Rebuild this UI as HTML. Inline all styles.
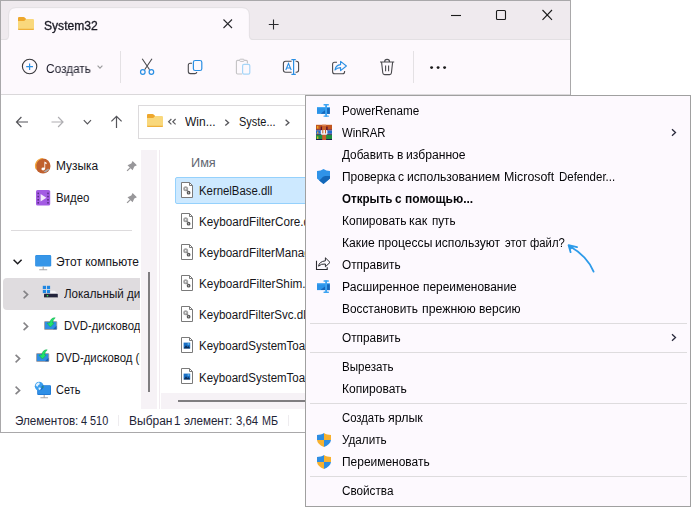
<!DOCTYPE html>
<html lang="ru">
<head>
<meta charset="utf-8">
<title>System32</title>
<style>
*{box-sizing:border-box;margin:0;padding:0}
html,body{width:691px;height:507px;overflow:hidden;background:#fff}
body{font-family:"Liberation Sans",sans-serif;font-size:12px;color:#15151a;position:relative}
.a{position:absolute}
.t{position:absolute;white-space:nowrap;line-height:16px;height:16px;transform-origin:0 50%}
svg{position:absolute;left:0;top:0;overflow:visible}
#win{position:absolute;left:0;top:0;width:571px;height:433px;overflow:hidden;background:#fff;z-index:0}
#winb{position:absolute;left:0;top:0;width:571px;height:433px;border:1px solid #a9a8aa;z-index:5}
#side{position:absolute;left:0;top:0;width:140px;height:410px;overflow:hidden}
#menu{position:absolute;left:305px;top:95px;width:386px;height:412px;border:1px solid #a0a0a0;background:#fdf9fe}
.ms{position:absolute;left:310px;width:377px;height:1px;background:#dedcde}
</style>
</head>
<body>
<svg width="0" height="0">
 <defs>
  <symbol id="folder" viewBox="0 0 16 13" overflow="visible">
   <path d="M0,1.1 Q0,0 1.1,0 L5.5,0 Q6.2,0 6.7,0.5 L8.2,2 L8.2,5 L0,5 Z" fill="#eea72c"/>
   <path d="M0,3.9 L5.6,3.9 Q6.2,3.9 6.7,3.4 L7.6,2.5 Q8.1,2 8.8,2 L14.9,2 Q16,2 16,3.1 L16,11.9 Q16,13 14.9,13 L1.1,13 Q0,13 0,11.9 Z" fill="#f9d87c"/>
   <path d="M0,11.7 L16,11.7 L16,11.9 Q16,13 14.9,13 L1.1,13 Q0,13 0,11.9 Z" fill="#efb03a"/>
  </symbol>
  <symbol id="dll" viewBox="0 0 12 16" overflow="visible">
   <path d="M0.5,0.5 L8.5,0.5 L11.5,3.5 L11.5,15.5 L0.5,15.5 Z" fill="#fff" stroke="#7a7a7a" stroke-width="1"/>
   <path d="M8.5,0.5 L8.5,3.5 L11.5,3.5" fill="none" stroke="#7a7a7a" stroke-width="1"/>
   <circle cx="4.7" cy="6.7" r="1.6" fill="none" stroke="#a3a3a3" stroke-width="1.8"/>
   <circle cx="7.6" cy="10.7" r="1.2" fill="#fff" stroke="#5a5a5a" stroke-width="1.4"/>
   <path d="M5.8,8 L6.6,9.4" stroke="#808080" stroke-width="1.4"/>
  </symbol>
  <symbol id="img" viewBox="0 0 12 16" overflow="visible">
   <path d="M0.5,0.5 L8.5,0.5 L11.5,3.5 L11.5,15.5 L0.5,15.5 Z" fill="#fff" stroke="#7a7a7a" stroke-width="1"/>
   <path d="M8.5,0.5 L8.5,3.5 L11.5,3.5" fill="none" stroke="#7a7a7a" stroke-width="1"/>
   <rect x="2.6" y="5.6" width="6.6" height="5.8" fill="#1a6fc4"/>
   <path d="M2.6,11.4 L5,8.2 L6.6,10 L7.6,9 L9.2,11.4 Z" fill="#0d2f5a"/>
   <rect x="6.6" y="6.3" width="1.8" height="1.4" fill="#6fc0f5"/>
  </symbol>
  <symbol id="chev" viewBox="0 0 5 8" overflow="visible">
   <path d="M0.4,0.3 L4.4,4 L0.4,7.7" fill="none" stroke="#858487" stroke-width="1.6"/>
  </symbol>
  <symbol id="uac" viewBox="0 0 14 14" overflow="visible">
   <path d="M7,0 C5,1.4 2.5,1.9 0,1.9 L0,7 L7,7 Z" fill="#2e8de2"/>
   <path d="M7,0 C9,1.4 11.5,1.9 14,1.9 L14,7 L7,7 Z" fill="#f7b12f"/>
   <path d="M0,7 C0.3,10 3,12.5 7,14 L7,7 Z" fill="#f7b12f"/>
   <path d="M14,7 C13.7,10 11,12.5 7,14 L7,7 Z" fill="#2e8de2"/>
  </symbol>
  <symbol id="prn" viewBox="0 0 13 13" overflow="visible">
   <rect x="0" y="3.2" width="12.8" height="6.7" fill="#2b93e8"/>
   <rect x="0" y="3.2" width="12.8" height="0.9" fill="#48abf5"/>
   <rect x="10.1" y="4.1" width="2.7" height="5.8" fill="#1666ba"/>
   <path d="M4,9.4 L8.3,6 L8.3,9.7 L4,9.7 Z" fill="#1666ba"/>
   <rect x="8.2" y="0.2" width="1.8" height="12.5" fill="#3ea4f2"/>
   <rect x="6.5" y="0.1" width="5.4" height="1.4" rx="0.5" fill="#3ea4f2"/>
   <rect x="6.5" y="11.4" width="5.4" height="1.4" rx="0.5" fill="#3ea4f2"/>
  </symbol>
  <symbol id="pin" viewBox="0 0 10 10" overflow="visible">
   <path d="M5.6,0 L9.9,4.3 L7.3,5.4 L5.6,9.2 L0.5,4.3 L4.3,2.6 Z" fill="#98979a"/>
   <path d="M3.4,6.6 L0.1,9.9" stroke="#98979a" stroke-width="1.3"/>
  </symbol>
 </defs>
</svg>

<div id="win">
 <!-- title bar -->
 <div class="a" style="left:0;top:0;width:571px;height:40px;background:#efeaee"></div>
 <div class="a" style="left:0;top:39px;width:571px;height:1px;background:#e3e0e3"></div>
 <svg width="571" height="433">
  <path d="M5,40 Q9,40 9,36 L9,15 Q9,8 16,8 L242,8 Q249,8 249,15 L249,36 Q249,40 253,40 Z" fill="#fdf9fd"/>
  <path d="M5,39.5 Q8.6,39.5 8.6,36 L8.6,15 Q8.6,7.6 16,7.6 L242,7.6 Q249.4,7.6 249.4,15 L249.4,36 Q249.4,39.5 253,39.5" fill="none" stroke="#e3e0e3" stroke-width="0.9"/>
 </svg>
 <!-- toolbar -->
 <div class="a" style="left:0;top:40px;width:571px;height:54px;background:#fdf9fd"></div>
 <div class="a" style="left:0;top:94px;width:571px;height:1px;background:#dad8da"></div>

 <svg width="571" height="433" fill="none">
  <!-- tab folder + close + plus -->
  <use href="#folder" x="18" y="17" width="16" height="13"/>
  <path d="M223.5,19.5 L232,28 M232,19.5 L223.5,28" stroke="#2a2a2e" stroke-width="1.1"/>
  <path d="M268.8,24.5 L278.6,24.5 M273.5,19.6 L273.5,29.4" stroke="#2a2a2e" stroke-width="1.1"/>
  <!-- window controls -->
  <path d="M451,15.5 L461,15.5" stroke="#1b1b1b" stroke-width="1.1"/>
  <rect x="496.5" y="10.5" width="9" height="9" rx="1" stroke="#1b1b1b" stroke-width="1.1"/>
  <path d="M542.5,10 L552,19.8 M552,10 L542.5,19.8" stroke="#1b1b1b" stroke-width="1.1"/>
  <!-- new (+) -->
  <circle cx="29.6" cy="66.5" r="7.2" stroke="#38383c" stroke-width="1.1"/>
  <path d="M26.2,66.7 L33,66.7 M29.6,63.4 L29.6,70" stroke="#2a8fe3" stroke-width="1.2"/>
  <path d="M97.6,65.6 L100,68.2 L102.4,65.6" stroke="#9a9a9c" stroke-width="1.1"/>
  <path d="M120.5,51 L120.5,83" stroke="#e4e1e4" stroke-width="1"/>
  <path d="M413.5,51 L413.5,83" stroke="#e4e1e4" stroke-width="1"/>
  <!-- scissors -->
  <path d="M142.2,58.8 L149.6,69.8 M152,58.8 L144.6,69.8" stroke="#4a4a4e" stroke-width="1.1"/>
  <circle cx="142.8" cy="72" r="2.3" stroke="#2a8fe3" stroke-width="1.2"/>
  <circle cx="151.4" cy="72" r="2.3" stroke="#2a8fe3" stroke-width="1.2"/>
  <!-- copy -->
  <path d="M192,63.2 L190.2,63.2 Q188.3,63.2 188.3,65.2 L188.3,71.6 Q188.3,73.6 190.3,73.6 L195,73.6 Q196.8,73.6 196.8,72" stroke="#4a4a4e" stroke-width="1.1"/>
  <rect x="193.4" y="60.5" width="8.4" height="10" rx="1.8" stroke="#2a8fe3" stroke-width="1.2"/>
  <!-- paste (disabled) -->
  <path d="M242,74 L237.6,74 Q236.4,74 236.4,72.8 L236.4,61.6 Q236.4,60.4 237.6,60.4 L246.2,60.4 Q247.4,60.4 247.4,61.6 L247.4,63.6" stroke="#c4c3c5" stroke-width="1.1"/>
  <rect x="239.6" y="59.2" width="4.6" height="2.2" rx="1" stroke="#c4c3c5" stroke-width="1" fill="#fdf9fd"/>
  <rect x="242.6" y="64.4" width="7.2" height="9.8" rx="1.4" stroke="#a6d5f7" stroke-width="1.2"/>
  <!-- rename -->
  <path d="M291.6,61.2 L285.6,61.2 Q283.4,61.2 283.4,63.4 L283.4,70 Q283.4,72.2 285.6,72.2 L291.6,72.2 M295.6,61.2 L296.4,61.2 Q298.6,61.2 298.6,63.4 L298.6,70 Q298.6,72.2 296.4,72.2 L295.6,72.2" stroke="#4a4a4e" stroke-width="1.1"/>
  <path d="M285.8,70 L288.5,63.4 L291.2,70 M286.7,68 L290.3,68" stroke="#2a8fe3" stroke-width="1.1"/>
  <path d="M291.4,59.6 L295.8,59.6 M291.4,74.4 L295.8,74.4 M293.6,59.6 L293.6,74.4" stroke="#2a8fe3" stroke-width="1.2"/>
  <!-- share -->
  <path d="M337,62.2 L334.6,62.2 Q332.6,62.2 332.6,64.2 L332.6,71.8 Q332.6,73.8 334.6,73.8 L342.6,73.8 Q344.6,73.8 344.6,71.8 L344.6,71" stroke="#4a4a4e" stroke-width="1.1"/>
  <path d="M335,70 Q335.6,65 340.6,64.6 L340.6,61.4 L346.4,66 L340.6,70.6 L340.6,67.6 Q337,67.6 335,70 Z" stroke="#2a8fe3" stroke-width="1.1" stroke-linejoin="round"/>
  <!-- trash -->
  <path d="M380,62 L394.2,62 M384.6,62 Q384.6,59.4 387.1,59.4 Q389.6,59.4 389.6,62 M381.6,62.4 L382.8,73 Q383,74.6 384.6,74.6 L389.6,74.6 Q391.2,74.6 391.4,73 L392.6,62.4 M385.6,65.4 L385.6,71.2 M388.6,65.4 L388.6,71.2" stroke="#4a4a4e" stroke-width="1.1"/>
  <!-- dots -->
  <circle cx="431.6" cy="67.6" r="1.45" fill="#1b1b1b"/><circle cx="438.1" cy="67.6" r="1.45" fill="#1b1b1b"/><circle cx="444.6" cy="67.6" r="1.45" fill="#1b1b1b"/>
  <!-- nav arrows -->
  <path d="M16.5,122 L28,122 M21.4,117 L16.5,122 L21.4,127" stroke="#55555a" stroke-width="1.2"/>
  <path d="M51.5,122 L63,122 M58.1,117 L63,122 L58.1,127" stroke="#afaeb2" stroke-width="1.2"/>
  <path d="M83.8,120.2 L87.4,123.8 L91,120.2" stroke="#55555a" stroke-width="1.2"/>
  <path d="M116.5,116.5 L116.5,128 M111.4,121.4 L116.5,116.4 L121.6,121.4" stroke="#55555a" stroke-width="1.2"/>
 </svg>
 <!-- address box -->
 <div class="a" style="left:138px;top:105px;width:200px;height:34px;border:1px solid #dcdadc;background:#fff"></div>
 <svg width="571" height="433" fill="none">
  <use href="#folder" x="147" y="114" width="16" height="13"/>
  <path d="M171.4,119 L168.6,121.7 L171.4,124.4 M175.6,119 L172.8,121.7 L175.6,124.4" stroke="#5e5e62" stroke-width="1.2"/>
  <path d="M225.3,119.8 L228.6,122.7 L225.3,125.6" stroke="#55555a" stroke-width="1.3"/>
  <path d="M285.6,119.8 L288.9,122.7 L285.6,125.6" stroke="#55555a" stroke-width="1.3"/>
 </svg>

 <!-- sidebar -->
 <div class="a" style="left:3px;top:278px;width:137px;height:32px;background:#dfdcdf;border-radius:4px 0 0 4px"></div>
 <div class="a" style="left:11px;top:230px;width:121px;height:1px;background:#dddbdd"></div>
 <div id="side">
<div class="t" style="left:55.76px;top:158.0px;transform:scaleX(0.9945);">Музыка</div>
<div class="t" style="left:56.10px;top:190.3px;transform:scaleX(0.9513);">Видео</div>
<div class="t" style="left:55.90px;top:254.0px;transform:scaleX(0.9995);">Этот компьюте</div>
<div class="t" style="left:64.30px;top:286.0px;transform:scaleX(0.9644);">Локальный диск (C:)</div>
<div class="t" style="left:63.70px;top:318.0px;transform:scaleX(0.9460);">DVD-дисковод (D:) CCCOMA</div>
<div class="t" style="left:55.70px;top:350.0px;transform:scaleX(0.9460);">DVD-дисковод (D:) CCCOMA_X64</div>
<div class="t" style="left:56.25px;top:382.0px;transform:scaleX(0.9122);">Сеть</div>
 </div>
 <svg width="571" height="433" fill="none">
  <!-- music -->
  <circle cx="43" cy="166" r="7.5" fill="#c0602e"/>
  <path d="M36.2,169 A7.5,7.5 0 0 1 43,158.5" stroke="#f2a43a" stroke-width="1.2"/>
  <path d="M44.4,161.4 L46.6,162.8 L46.6,164.2 L45.2,163.4 L45.2,168.6 Q45.2,170.4 43.2,170.4 Q41.4,170.4 41.4,169 Q41.4,167.6 43.4,167.6 L44.4,167.8 Z" fill="#fff"/>
  <path d="M43.6,171.6 L48.2,168.4 L49.2,169.8 L45.4,172.4 Z" fill="#a8a7a8"/>
  <!-- video -->
  <rect x="36" y="190" width="14.2" height="15.6" rx="1.6" fill="#a35be3"/>
  <path d="M40.6,194 L46.4,197.8 L40.6,201.6 Z" fill="#f3e9fb"/>
  <g fill="#5b2d86"><rect x="37.4" y="192.6" width="1.6" height="1.6"/><rect x="37.4" y="195.8" width="1.6" height="1.6"/><rect x="37.4" y="199" width="1.6" height="1.6"/><rect x="37.4" y="202" width="1.6" height="1.6"/>
  <rect x="47.2" y="192.6" width="1.6" height="1.6"/><rect x="47.2" y="195.8" width="1.6" height="1.6"/><rect x="47.2" y="199" width="1.6" height="1.6"/><rect x="47.2" y="202" width="1.6" height="1.6"/></g>
  <use href="#pin" x="127" y="161" width="10" height="10"/>
  <use href="#pin" x="127" y="193" width="10" height="10"/>
  <!-- this PC -->
  <path d="M13.6,259.8 L17.6,263.8 L21.6,259.8" stroke="#1b1b1f" stroke-width="1.5"/>
  <rect x="35.2" y="255" width="16" height="11.6" rx="1.4" fill="#2d8de2"/>
  <rect x="35.8" y="255.6" width="14.8" height="10.4" rx="1" fill="#3796e8"/>
  <path d="M43.2,266.6 L43.2,269.6 M39.2,269.8 L47.2,269.8" stroke="#a9a8aa" stroke-width="1.1"/>
  <!-- chevrons -->
  <use href="#chev" x="23.2" y="290.6" width="5" height="8"/>
  <use href="#chev" x="23.2" y="322.4" width="5" height="8"/>
  <use href="#chev" x="15.2" y="354.6" width="5" height="8"/>
  <use href="#chev" x="15.2" y="386.4" width="5" height="8"/>
  <!-- local disk -->
  <g fill="#1f86e2"><rect x="42.8" y="285.8" width="3.2" height="3.2"/><rect x="46.9" y="285.8" width="3.2" height="3.2"/><rect x="42.8" y="289.9" width="3.2" height="3.2"/><rect x="46.9" y="289.9" width="3.2" height="3.2"/></g>
  <path d="M50.4,290.8 L54.6,290.8 L57.6,293.8 L50.4,293.8 Z" fill="#f4f4f6"/>
  <rect x="44" y="293.8" width="13.8" height="3.8" rx="0.6" fill="#23243c"/>
  <rect x="44" y="297.2" width="13.8" height="0.8" fill="#9c9ba0"/>
  <rect x="46.8" y="295" width="1.4" height="1.4" fill="#37e05a"/>
  <!-- dvd 1 -->
  <g id="dvdg">
   <rect x="44.5" y="321.5" width="12.3" height="8" rx="0.6" fill="#2f8de3" stroke="#a8948f" stroke-width="0.7"/>
   <path d="M56.5,325.8 L56.5,329.2 L53,329.2 Z" fill="#1660b2"/>
   <path d="M55.2,317.8 Q50.8,317.4 49.6,323 L47,323.2 L50.4,327 L54.1,323.2 L52.6,323 Q52.6,320 55.2,317.8 Z" fill="#22e26a" stroke="#11a548" stroke-width="0.5"/>
  </g>
  <use href="#dvdg" transform="translate(-8,32)"/>
  <!-- network -->
  <rect x="37.2" y="385.2" width="13.8" height="9.8" rx="1" fill="#1f7ad6"/>
  <rect x="38" y="385.8" width="12.2" height="8.2" fill="#2f8fe6"/>
  <path d="M44.2,395 L44.2,397.6 M40.4,397.8 L48,397.8" stroke="#a9a8aa" stroke-width="1.1"/>
  <circle cx="39.2" cy="386.2" r="4.4" fill="#3b9fee"/>
  <path d="M43.4,385 A4.4,4.4 0 0 1 39.6,390.6 Q42,388.6 41.6,386 Z" fill="#1b6fc6"/>
  <path d="M35.6,385 Q36.6,382.8 39,382.2 Q40.4,383.4 39.4,384.6 Q38,385.2 37.6,386.8 Q36.4,386.6 35.6,385 Z M38.6,387.6 Q40.2,387 41,388.2 Q40.6,389.6 39.2,390 Q38.2,389 38.6,387.6 Z" fill="#dff1ff"/>
  <rect x="42.4" y="386.4" width="1.2" height="1.2" fill="#2fa84a"/>
 </svg>
 <!-- scrollbars -->
 <div class="a" style="left:141px;top:150px;width:16px;height:259px;background:#f6f2f6"></div>
 <div class="a" style="left:159px;top:150px;width:1px;height:259px;background:#f1ebf0"></div>
 <div class="a" style="left:148px;top:272px;width:2px;height:120px;background:#7f7d80"></div>
 <div class="a" style="left:161px;top:393px;width:200px;height:16px;background:#f6f2f6"></div>
 <div class="a" style="left:178px;top:400px;width:200px;height:2px;background:#7f7d80"></div>
 <!-- file list -->
 <div class="a" style="left:175px;top:177px;width:200px;height:27px;background:#cde9ff;border:1px solid #95d1fc;border-radius:2px"></div>
 <svg width="571" height="433" fill="none">
  <use href="#dll" x="181" y="182" width="12" height="16"/>
  <use href="#dll" x="181" y="213" width="12" height="16"/>
  <use href="#dll" x="181" y="244" width="12" height="16"/>
  <use href="#dll" x="181" y="275" width="12" height="16"/>
  <use href="#dll" x="181" y="306" width="12" height="16"/>
  <use href="#img" x="181" y="337" width="12" height="16"/>
  <use href="#img" x="181" y="368" width="12" height="16"/>
 </svg>
 <!-- status separators -->
 <div class="a" style="left:118px;top:415px;width:1px;height:11px;background:#eeecef"></div>
 <div class="a" style="left:288px;top:415px;width:1px;height:11px;background:#eeecef"></div>
<div class="t" style="left:43.80px;top:17.7px;transform:scaleX(1.0079);color:#1a1a24;-webkit-text-stroke:0.30px currentColor;will-change:transform;">System32</div>
<div class="t" style="left:45.71px;top:60.5px;transform:scaleX(0.9852);color:#1c1c2a;will-change:transform;">Создать</div>
<div class="t" style="left:185.15px;top:113.5px;transform:scaleX(0.9987);">Win...</div>
<div class="t" style="left:239.14px;top:113.5px;transform:scaleX(0.9133);">Syste...</div>
<div class="t" style="left:190.79px;top:154.5px;transform:scaleX(1.0589);color:#5f6570;">Имя</div>
<div class="t" style="left:198.70px;top:183.0px;transform:scaleX(0.9475);">KernelBase.dll</div>
<div class="t" style="left:198.77px;top:214.0px;transform:scaleX(0.9738);">KeyboardFilterCore.dll</div>
<div class="t" style="left:198.78px;top:245.0px;transform:scaleX(0.9735);">KeyboardFilterManager.dll</div>
<div class="t" style="left:198.77px;top:276.0px;transform:scaleX(0.9805);">KeyboardFilterShim.dll</div>
<div class="t" style="left:198.78px;top:307.0px;transform:scaleX(0.9642);">KeyboardFilterSvc.dll</div>
<div class="t" style="left:198.79px;top:338.0px;transform:scaleX(0.9589);">KeyboardSystemToastIcon.png</div>
<div class="t" style="left:198.79px;top:369.5px;transform:scaleX(0.9589);">KeyboardSystemToastIcon.contrast-white.png</div>
<div class="t" style="left:14.62px;top:413.0px;transform:scaleX(0.9714);color:#1e2436;">Элементов:</div>
<div class="t" style="left:80.97px;top:413.0px;transform:scaleX(0.9061);color:#1e2436;">4 510</div>
<div class="t" style="left:128.85px;top:413.0px;transform:scaleX(0.9998);color:#1e2436;">Выбран</div>
<div class="t" style="left:174.12px;top:413.0px;transform:scaleX(0.9633);color:#1e2436;">1</div>
<div class="t" style="left:184.21px;top:413.0px;transform:scaleX(0.9683);color:#1e2436;">элемент:</div>
<div class="t" style="left:236.17px;top:413.0px;transform:scaleX(0.9475);color:#1e2436;">3,64</div>
<div class="t" style="left:261.75px;top:413.0px;transform:scaleX(0.8991);color:#1e2436;">МБ</div>
 <div id="winb"></div>
</div>

<div id="mwrap" style="position:absolute;left:0;top:0;width:691px;height:507px;z-index:10;will-change:transform;color:#050508">
<div id="menu"></div>
<div class="ms" style="top:323px"></div>
<div class="ms" style="top:352px"></div>
<div class="ms" style="top:403px"></div>
<div class="ms" style="top:476px"></div>
<div class="t" style="left:341.68px;top:103.0px;transform:scaleX(0.9730);">PowerRename</div>
<div class="t" style="left:342.15px;top:125.0px;transform:scaleX(0.9461);">WinRAR</div>
<div class="t" style="left:341.55px;top:147.0px;transform:scaleX(0.9801);">Добавить</div>
<div class="t" style="left:396.66px;top:147.0px;transform:scaleX(0.9960);">в</div>
<div class="t" style="left:406.09px;top:147.0px;transform:scaleX(1.0125);">избранное</div>
<div class="t" style="left:341.75px;top:169.0px;transform:scaleX(0.9957);">Проверка</div>
<div class="t" style="left:398.39px;top:169.0px;transform:scaleX(1.0040);">с</div>
<div class="t" style="left:407.49px;top:169.0px;transform:scaleX(1.0124);">использованием</div>
<div class="t" style="left:504.42px;top:169.0px;transform:scaleX(1.0325);">Microsoft</div>
<div class="t" style="left:559.19px;top:169.0px;transform:scaleX(0.9562);">Defender...</div>
<div class="t" style="left:341.87px;top:191.0px;transform:scaleX(0.9661);font-weight:bold;">Открыть</div>
<div class="t" style="left:395.10px;top:191.0px;transform:scaleX(0.9835);font-weight:bold;">с</div>
<div class="t" style="left:404.50px;top:191.0px;transform:scaleX(0.9992);font-weight:bold;">помощью...</div>
<div class="t" style="left:341.75px;top:213.0px;transform:scaleX(0.9996);">Копировать</div>
<div class="t" style="left:409.46px;top:213.0px;transform:scaleX(1.0515);">как</div>
<div class="t" style="left:432.02px;top:213.0px;transform:scaleX(0.9696);">путь</div>
<div class="t" style="left:341.74px;top:235.0px;transform:scaleX(1.0122);">Какие</div>
<div class="t" style="left:377.69px;top:235.0px;transform:scaleX(1.0083);">процессы</div>
<div class="t" style="left:435.39px;top:235.0px;transform:scaleX(1.0099);">используют</div>
<div class="t" style="left:504.72px;top:235.0px;transform:scaleX(0.9289);">этот</div>
<div class="t" style="left:529.83px;top:235.0px;transform:scaleX(0.9413);">файл?</div>
<div class="t" style="left:342.06px;top:257.0px;transform:scaleX(0.9844);">Отправить</div>
<div class="t" style="left:341.74px;top:279.0px;transform:scaleX(1.0108);">Расширенное</div>
<div class="t" style="left:423.01px;top:279.0px;transform:scaleX(0.9930);">переименование</div>
<div class="t" style="left:341.76px;top:301.0px;transform:scaleX(0.9875);">Восстановить</div>
<div class="t" style="left:421.58px;top:301.0px;transform:scaleX(1.0240);">прежнюю</div>
<div class="t" style="left:479.30px;top:301.0px;transform:scaleX(1.0051);">версию</div>
<div class="t" style="left:342.06px;top:330.0px;transform:scaleX(0.9844);">Отправить</div>
<div class="t" style="left:341.78px;top:359.0px;transform:scaleX(0.9640);">Вырезать</div>
<div class="t" style="left:341.75px;top:381.0px;transform:scaleX(1.0044);">Копировать</div>
<div class="t" style="left:342.03px;top:410.0px;transform:scaleX(0.9426);">Создать</div>
<div class="t" style="left:387.80px;top:410.0px;transform:scaleX(1.0345);">ярлык</div>
<div class="t" style="left:341.71px;top:432.0px;transform:scaleX(0.9761);">Удалить</div>
<div class="t" style="left:341.75px;top:454.0px;transform:scaleX(0.9967);">Переименовать</div>
<div class="t" style="left:341.91px;top:483.0px;transform:scaleX(0.9764);">Свойства</div>
<svg width="691" height="507" fill="none">
 <use href="#prn" x="317" y="104" width="13" height="13"/>
 <use href="#prn" x="317" y="280.2" width="13" height="13"/>
 <!-- winrar -->
 <g>
  <rect x="316" y="124.8" width="16" height="4.8" fill="#c2561f"/>
  <rect x="316" y="129.4" width="16" height="1.1" fill="#5a0f2e"/>
  <rect x="316" y="130.5" width="16" height="3.2" fill="#1f6bd0"/>
  <rect x="316" y="133.6" width="16" height="1.4" fill="#4b4a6e"/>
  <rect x="316" y="135" width="16" height="4.1" fill="#1f8f3f"/>
  <rect x="316" y="139" width="16" height="1" fill="#1b1b4d"/>
  <rect x="317.2" y="126" width="1.1" height="2.6" fill="#f6b922"/>
  <rect x="317.2" y="131.5" width="1.1" height="2.1" fill="#f6b922"/>
  <rect x="317.2" y="136.4" width="1.1" height="2.6" fill="#f6b922"/>
  <rect x="320.7" y="126.6" width="1.5" height="3.4" fill="#5a0f2e"/>
  <rect x="326.1" y="126.6" width="1.5" height="3.4" fill="#5a0f2e"/>
  <rect x="322.2" y="124.8" width="3.9" height="15.2" fill="#c8602a"/>
  <rect x="322.2" y="124.5" width="3.9" height="0.9" fill="#eeb08e"/>
  <rect x="320.8" y="130" width="6.6" height="4.8" rx="1.3" fill="#f1f1f6"/>
  <rect x="322.3" y="130" width="1" height="3.4" fill="#c8602a"/>
  <rect x="325" y="130" width="1" height="3.4" fill="#c8602a"/>
 </g>
 <!-- defender shield -->
 <path d="M323.5,169 L326.4,170.5 L330,171 L330,178.6 L323.5,184 L317,178.6 L317,171 L320.6,170.5 Z" fill="#2f93e8"/>
 <path d="M330,176 L325.2,176 Q322.8,176.4 321.4,178.4 L319.2,180.4 L323.5,184 L330,178.6 Z" fill="#1467b8"/>
 <!-- share small -->
 <path d="M316.5,260.8 L316.5,269.5 L327.2,269.5 L327.2,267.2" stroke="#2a2a30" stroke-width="1.1"/>
 <path d="M318.6,266.2 Q319,261.6 325.4,260.8 L325.4,257.8 L330,262.4 L325.4,266.8 L325.4,264 Q321,263.6 318.6,266.2 Z" stroke="#2a2a30" stroke-width="1" stroke-linejoin="round" fill="#fdf9fe"/>
 <!-- uac -->
 <use href="#uac" x="317" y="433" width="14" height="14"/>
 <use href="#uac" x="317" y="455" width="14" height="14"/>
 <!-- submenu arrows -->
 <path d="M672,129.3 L675.5,132.5 L672,135.7" stroke="#2a2a3c" stroke-width="1.3"/>
 <path d="M672,334.3 L675.5,337.5 L672,340.7" stroke="#2a2a3c" stroke-width="1.3"/>
 <!-- annotation arrow -->
 <path d="M593.6,271.6 Q587.1,256 569.4,246" stroke="#2d9be9" stroke-width="1.8" stroke-linecap="round"/>
 <path d="M577,247.2 L568.6,245.2 L570.6,252.2" stroke="#2d9be9" stroke-width="1.8" stroke-linecap="round" stroke-linejoin="round"/>
 <path d="M568.8,245.4 L574.4,246.8 L570.2,250 Z" fill="#2d9be9"/>
</svg>
</div>
</body>
</html>
